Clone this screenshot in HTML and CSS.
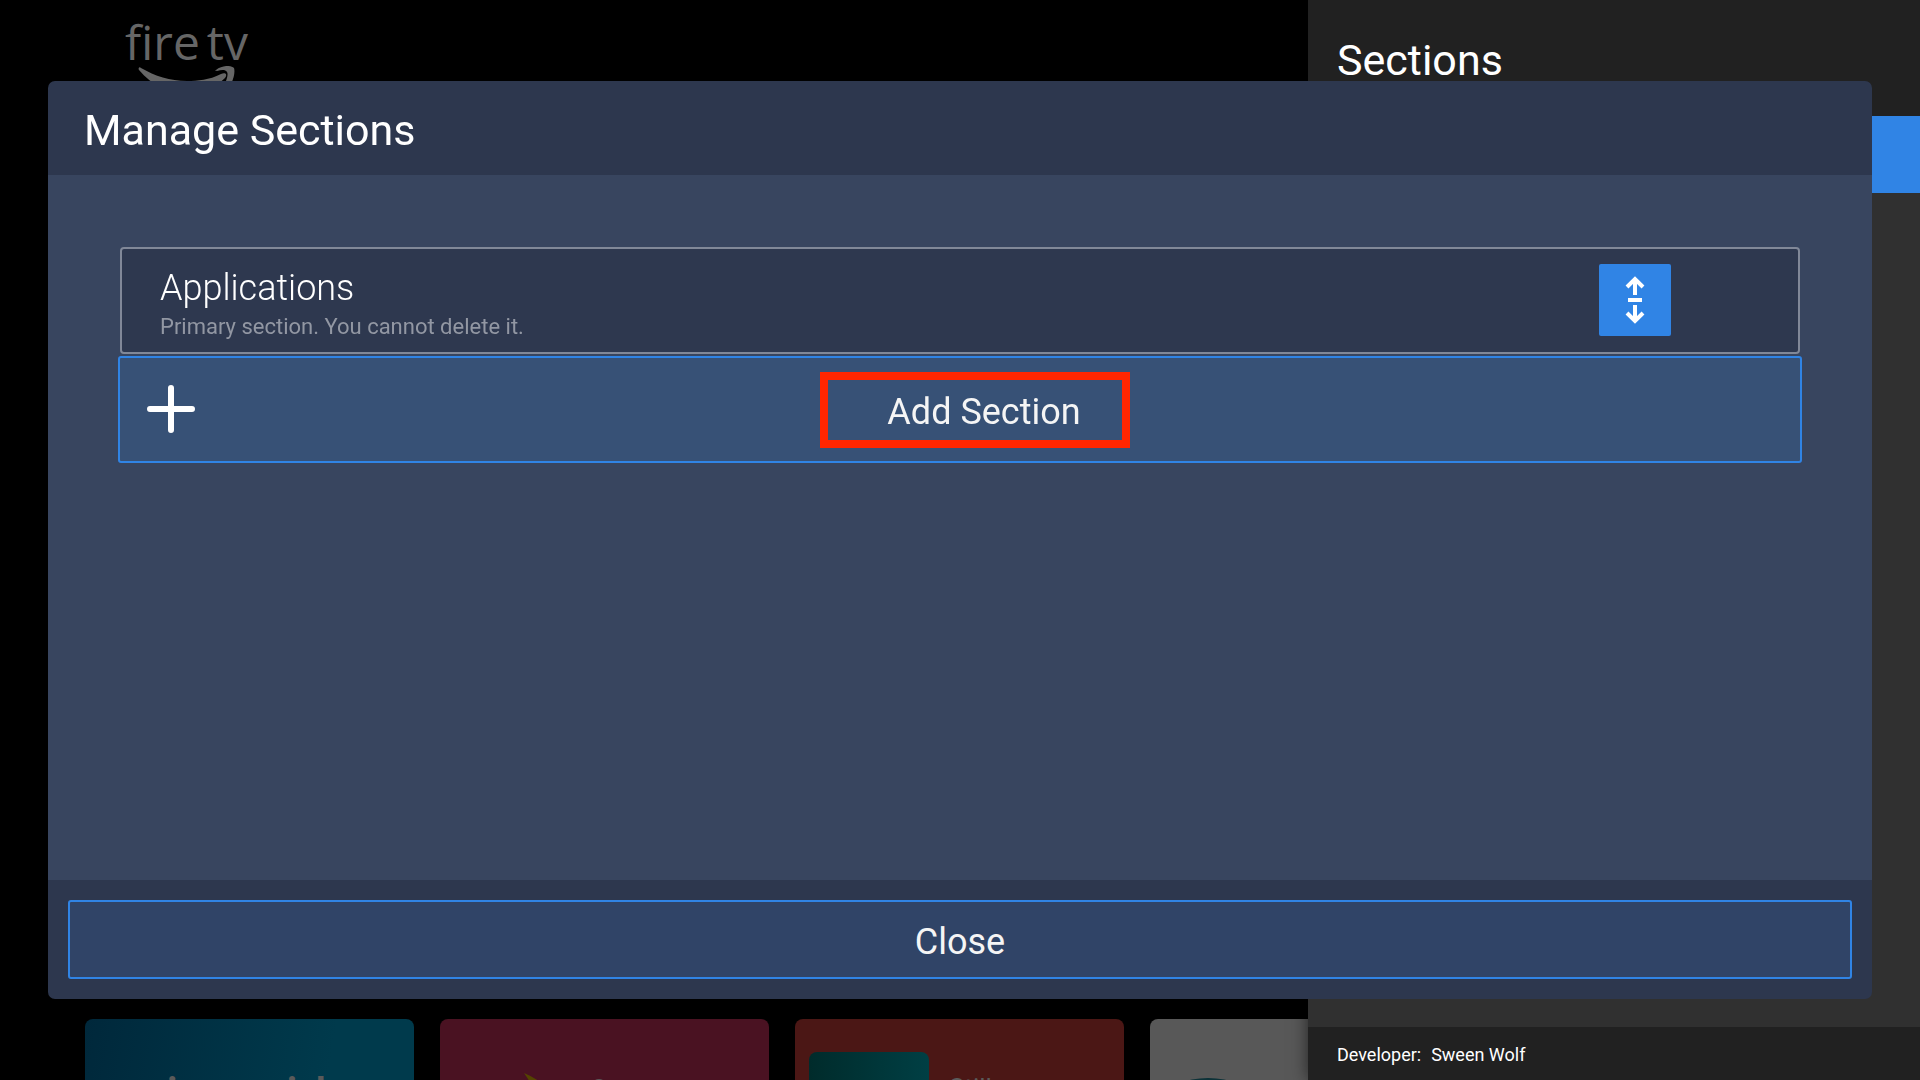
FILE: index.html
```html
<!DOCTYPE html>
<html lang="en">
<head>
<meta charset="utf-8">
<meta name="viewport" content="width=device-width, initial-scale=1">
<title>Manage Sections</title>
<link rel="stylesheet" href="styles.css">
</head>
<body>
<div class="screen">
  <main class="home">
    <header class="brand">
      <div class="brand-name"><span>fire</span><span>tv</span></div>
      <svg class="brand-smile" viewBox="0 0 100 40" aria-hidden="true">
        <path d="M3 2C1 0 0 3 1 4C14 20 31 27 50 27C64 27 78 21 87 12C90 8 87 6 83 8C71 14 60 15 49 15C32 15 17 10 3 2Z"/>
        <path d="M78 4C84 -1 93 -1 96 2C98 8 93 22 86 27C84 28 83 27 84 25C87 18 91 9 89 6C87 3 83 4 79 5C77 5 77 4 78 4Z"/>
      </svg>
    </header>
    <div class="tiles">
      <article class="tile tile-prime"><span class="tile-logo">prime video</span></article>
      <article class="tile tile-berry">
        <svg class="tile-art" viewBox="0 0 329 185" aria-hidden="true">
          <path fill="#554400" d="M84 54Q94 58 104 66L92 66Q88 60 84 54Z"/>
          <circle cx="159" cy="68" r="8" fill="#5a5a5a"/>
        </svg>
      </article>
      <article class="tile tile-red"><span class="thumb"></span><span class="tile-text">Still</span></article>
      <article class="tile tile-gray">
        <svg class="tile-art" viewBox="0 0 329 185" aria-hidden="true">
          <ellipse cx="58" cy="79" rx="42" ry="20" fill="#0c3238"/>
        </svg>
      </article>
    </div>
  </main>
  <aside class="panel">
    <h2 class="panel-title">Sections</h2>
    <div class="panel-body"><div class="panel-item"></div></div>
    <footer class="panel-footer"><span>Developer:</span><span>Sween Wolf</span></footer>
  </aside>
</div>
<div class="overlay">
  <section class="dialog" role="dialog" aria-labelledby="dialog-title">
    <header class="dialog-header"><h1 class="dialog-title" id="dialog-title">Manage Sections</h1></header>
    <div class="dialog-body">
      <div class="section-row">
        <div class="section-info">
          <div class="section-name">Applications</div>
          <div class="section-note">Primary section. You cannot delete it.</div>
        </div>
        <button class="move" type="button" aria-label="Move section">
          <svg viewBox="0 0 72 72" aria-hidden="true" fill="none" stroke="#fff" stroke-width="4">
            <path d="M36 31V15M28 23L36 15L44 23M29 36H43M36 41V57M28 49L36 57L44 49"/>
          </svg>
        </button>
      </div>
      <button class="add" type="button">
        <svg class="plus" viewBox="0 0 48 48" aria-hidden="true" stroke="#fff" stroke-width="6" stroke-linecap="round"><path d="M24 3V45M3 24H45"/></svg>
        <span class="add-label">Add Section</span>
        <span class="highlight"></span>
      </button>
    </div>
    <footer class="dialog-footer"><button class="close" type="button">Close</button></footer>
  </section>
</div>
</body>
</html>
```
FILE: styles.css
```css
* {
  box-sizing: border-box;
}

body {
  margin: 0;
  background: #000;
  color: #fff;
  font-family: Roboto, "Liberation Sans", sans-serif;
}

h1,
h2 {
  margin: 0;
  font-weight: 400;
}

button {
  margin: 0;
  padding: 0;
  color: inherit;
  font: inherit;
}

.screen {
  display: grid;
  grid-template-columns: minmax(0, 1fr) 612px;
  height: 100vh;
  overflow: hidden;
}

.home {
  display: flex;
  flex-direction: column;
  justify-content: space-between;
  overflow: hidden;
}

.brand {
  padding: 8px 125px 0;
}

.brand-name {
  display: flex;
  gap: 7px;
  color: #666;
  font: 500 48px/68px "Open Sans", "Noto Sans", sans-serif;
}

.brand-smile {
  display: block;
  width: 100px;
  margin: -10px 0 0 13px;
  fill: #666;
}

.tiles {
  display: flex;
  gap: 26px;
  height: 61px;
  padding-left: 85px;
}

.tile {
  flex: 0 0 329px;
  height: 185px;
  overflow: hidden;
  border-radius: 8px;
}

.tile-prime {
  background: linear-gradient(100deg, #00283b, #003a4c 70%);
  text-align: center;
}

.tile-logo {
  color: #5a5a5a;
  font: 600 46px/146px "Open Sans", "Noto Sans", sans-serif;
}

.tile-berry {
  background: #4a1222;
}

.tile-red {
  display: flex;
  gap: 20px;
  padding: 33px 14px;
  background: #4b1715;
}

.thumb {
  width: 120px;
  height: 120px;
  border-radius: 8px;
  background: linear-gradient(90deg, #002b2b, #003f44);
}

.tile-text {
  padding-top: 20px;
  color: #5a5a5a;
  font-size: 26px;
  line-height: 32px;
}

.tile-gray {
  background: #585858;
}

.tile-art {
  display: block;
  width: 100%;
}

.panel {
  display: flex;
  flex-direction: column;
  background: #303030;
  box-shadow: 0 0 16px rgba(0, 0, 0, 0.6);
  z-index: 1;
}

.panel-title {
  padding: 32px 29px 28px;
  background: #212121;
  font-size: 43px;
  line-height: 56px;
}

.panel-body {
  flex: 1;
}

.panel-item {
  height: 77px;
  background: #3084e5;
}

.panel-footer {
  display: flex;
  gap: 10px;
  padding: 16px 29px 13px;
  background: #212121;
  font-size: 18px;
  line-height: 24px;
}

.overlay {
  position: fixed;
  inset: 0;
  z-index: 2;
  display: flex;
  padding: 81px 48px;
}

.dialog {
  display: flex;
  flex: 1;
  flex-direction: column;
  overflow: hidden;
  border-radius: 7px;
  background: #2d374e;
}

.dialog-header {
  padding: 21px 36px 17px;
}

.dialog-title {
  font-size: 43px;
  line-height: 56px;
}

.dialog-body {
  display: flex;
  flex: 1;
  flex-direction: column;
  gap: 2px;
  padding: 72px 70px;
  background: #38455f;
}

.section-row {
  display: flex;
  align-items: flex-start;
  justify-content: space-between;
  height: 107px;
  margin: 0 2px;
  padding: 15px 127px 0 38px;
  border: 2px solid #818898;
  border-radius: 4px;
  background: #2e384f;
}

.section-name {
  padding-top: 3px;
  font-size: 36px;
  font-weight: 300;
  line-height: 42px;
}

.section-note {
  color: #9297a3;
  font-size: 22px;
  line-height: 36px;
}

.move {
  width: 72px;
  height: 72px;
  border: 0;
  border-radius: 2px;
  background: #3084e5;
}

.move svg {
  display: block;
}

.add {
  position: relative;
  display: flex;
  align-items: center;
  height: 107px;
  padding: 0 27px 1px;
  border: 2px solid #3084e5;
  border-radius: 3px;
  background: #375176;
}

.plus {
  width: 48px;
  height: 48px;
}

.add-label {
  flex: 1;
  padding-top: 6px;
  color: #f5f5f5;
  font-size: 36px;
  line-height: 44px;
}

.highlight {
  position: absolute;
  top: 14px;
  left: calc(50% - 140px);
  width: 310px;
  height: 76px;
  border: 8px solid #ff2600;
}

.dialog-footer {
  padding: 20px;
}

.close {
  display: block;
  width: 100%;
  height: 79px;
  padding-top: 4px;
  border: 2px solid #3084e5;
  border-radius: 3px;
  background: #304467;
  color: #f5f5f5;
  font-size: 36px;
}
```
